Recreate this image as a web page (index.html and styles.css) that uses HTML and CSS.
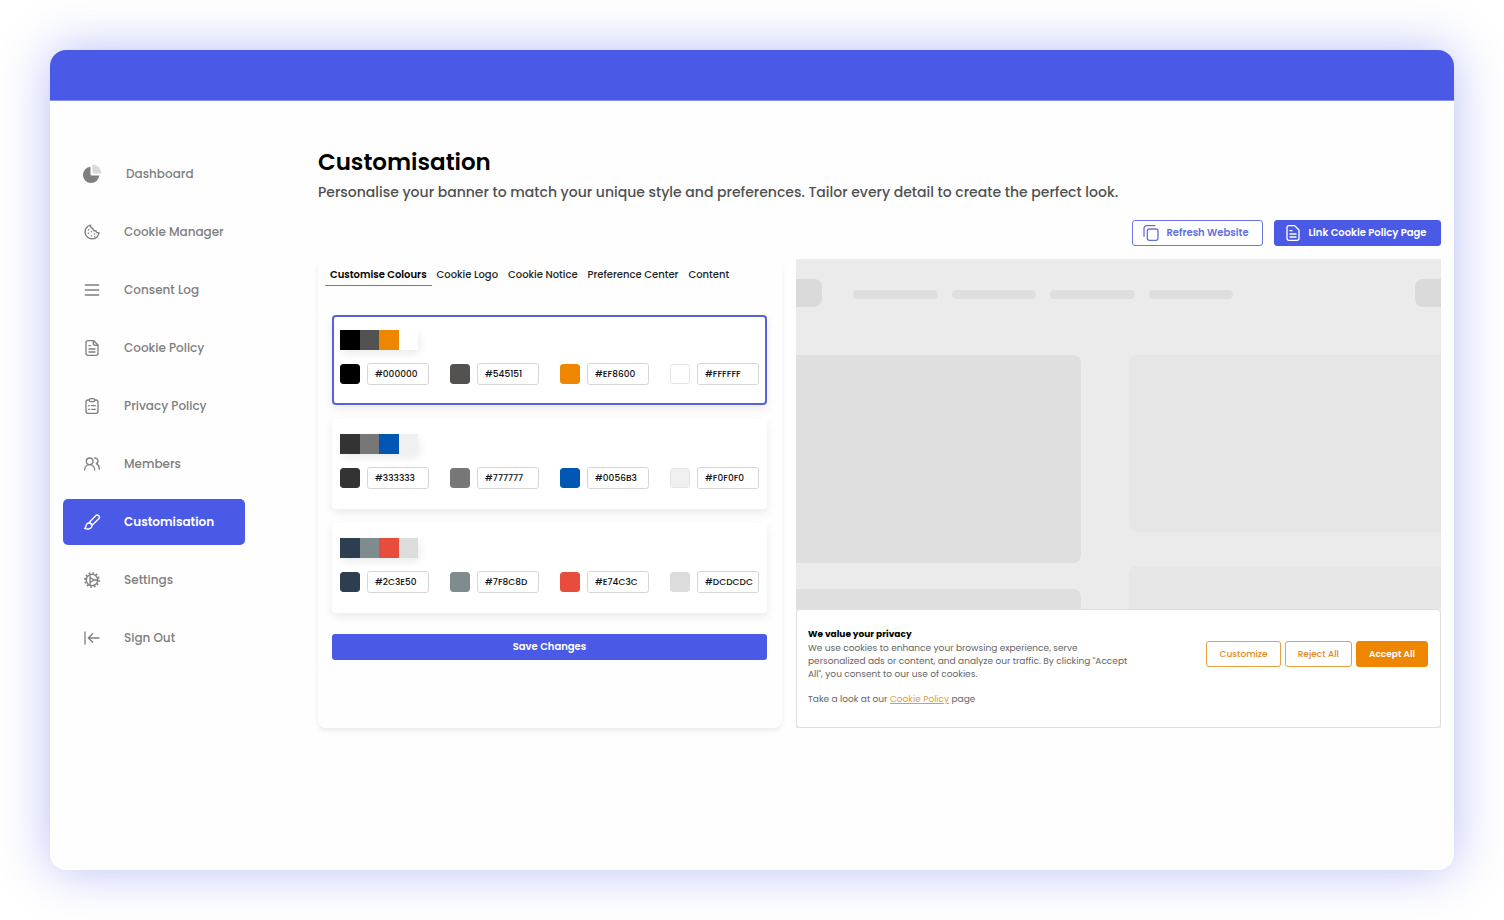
FILE: index.html
```html
<!DOCTYPE html>
<html lang="en">
<head>
<meta charset="utf-8">
<meta name="viewport" content="width=device-width, initial-scale=1">
<title>Customisation</title>
<link rel="stylesheet" href="styles.css">
</head>
<body>
<div class="window">
  <header class="topbar"></header>
  <div class="layout">
    <nav class="sidebar" aria-label="Main">
      <a class="nav-item nav-item-wide" href="#">
        <svg class="icon icon-pie" viewBox="0 0 20 20"><path d="M8.500 2.700a8.200 8.200 0 1 0 8.800 8.800H10a1.500 1.500 0 0 1-1.500-1.500z" fill="#7f7f7f"/><path d="M10.500.5a9 9 0 0 1 9 9h-7.500A1.500 1.500 0 0 1 10.500 8z" fill="#d8d8d8"/></svg>
        <span>Dashboard</span></a>
      <a class="nav-item" href="#">
        <svg class="icon" viewBox="0 0 24 24"><path d="M10 1.600A10.500 10.500 0 1 0 22.500 13c-2 1-4.500 0-4.500-3-3 1-5-1-4.500-3.500C10.500 6.500 9.300 4 10 1.600z"/><path d="M7 8.500v.1M11 11.500v.1M6.500 14v.1M11 17.500v.1M15.500 15v.1M16 19v.1" stroke-width="2.200"/></svg>
        <span>Cookie Manager</span></a>
      <a class="nav-item" href="#">
        <svg class="icon" viewBox="0 0 24 24"><path d="M2 4.500h20M2 12h20M2 19.500h20"/></svg>
        <span>Consent Log</span></a>
      <a class="nav-item" href="#">
        <svg class="icon" viewBox="0 0 24 24"><path d="M14.500 1H6a3 3 0 0 0-3 3v16a3 3 0 0 0 3 3h12a3 3 0 0 0 3-3V7.500zM14 1.500V5a3 3 0 0 0 3 3h3.500M7.500 8.500h2M7.500 13.500h9M7.500 18h9"/></svg>
        <span>Cookie Policy</span></a>
      <a class="nav-item" href="#">
        <svg class="icon" viewBox="0 0 24 24"><path d="M8 3H6a3 3 0 0 0-3 3v14a3 3 0 0 0 3 3h12a3 3 0 0 0 3-3V6a3 3 0 0 0-3-3h-2"/><rect x="8" y="1" width="8" height="4.500" rx="2"/><path d="M7 11.500h1.500M11.500 11.500H17M7 17h1.500M11.500 17H17"/></svg>
        <span>Privacy Policy</span></a>
      <a class="nav-item" href="#">
        <svg class="icon" viewBox="0 0 24 24"><circle cx="8.500" cy="8" r="5"/><path d="M1 21c0-4.500 3-8 7.500-8s7.500 3.500 7.500 8M16 3a4.500 4.500 0 0 1 2.500 8.500c2.500 1.200 4.500 4 4.500 8"/></svg>
        <span>Members</span></a>
      <a class="nav-item nav-item-active" href="#" aria-current="page">
        <svg class="icon" viewBox="0 0 24 24"><path d="M8.500 12 17.500 2.500a3.200 3.200 0 0 1 4.600 4.600L12.500 16.500M8.500 12l4 4.500"/><path d="M7.500 13.500a4.300 4.300 0 0 0-4.300 4.300c0 1.500-.7 2.700-2.200 3.700 4 1.800 10.800 1.300 10.800-3.700a4.300 4.300 0 0 0-4.300-4.300z"/></svg>
        <span>Customisation</span></a>
      <a class="nav-item" href="#">
        <svg class="icon" viewBox="0 0 24 24"><circle cx="12" cy="12" r="8.500"/><circle cx="12" cy="12" r="10.500" stroke-width="2.600" stroke-dasharray="2.700 2.798"/><path d="M9 5.500v13M9 8.500l6.500 3.500L9 15.500M15.500 12H20"/></svg>
        <span>Settings</span></a>
      <a class="nav-item" href="#">
        <svg class="icon" viewBox="0 0 24 24"><path d="M1.500 3v18M22.500 12H7M13 5.500 6.500 12l6.500 6.500"/></svg>
        <span>Sign Out</span></a>
    </nav>

    <main class="main">
      <h1 class="title">Customisation</h1>
      <p class="subtitle">Personalise your banner to match your unique style and preferences. Tailor every detail to create the perfect look.</p>
      <div class="actions">
        <button class="button button-outline" type="button">
          <svg class="icon" viewBox="0 0 24 24"><rect x="6.500" y="6" width="16" height="17" rx="3"/><path d="M1.500 17V5a4 4 0 0 1 4-4H18"/></svg>Refresh Website</button>
        <button class="button button-solid" type="button">
          <svg class="icon" viewBox="0 0 24 24"><path d="M14.500 1H6a3 3 0 0 0-3 3v16a3 3 0 0 0 3 3h12a3 3 0 0 0 3-3V7.500zM7.500 8.500h3M7.500 13.500h9M7.500 18h9"/></svg>Link Cookie Policy Page</button>
      </div>

      <div class="panels">
        <section class="editor">
          <div class="tabs" role="tablist">
            <button class="tab tab-active" type="button" role="tab" aria-selected="true">Customise Colours</button>
            <button class="tab" type="button" role="tab">Cookie Logo</button>
            <button class="tab" type="button" role="tab">Cookie Notice</button>
            <button class="tab" type="button" role="tab">Preference Center</button>
            <button class="tab" type="button" role="tab">Content</button>
          </div>
          <form class="palettes">
            <div class="palette palette-selected">
              <div class="strip"><i style="background:#000000"></i><i style="background:#545151"></i><i style="background:#ef8600"></i><i style="background:#ffffff"></i></div>
              <div class="fields">
                <div class="field"><input class="swatch" type="color" value="#000000" aria-label="Pick colour 1"><input class="hex" type="text" value="#000000" aria-label="Colour 1"></div>
                <div class="field"><input class="swatch" type="color" value="#545151" aria-label="Pick colour 2"><input class="hex" type="text" value="#545151" aria-label="Colour 2"></div>
                <div class="field"><input class="swatch" type="color" value="#ef8600" aria-label="Pick colour 3"><input class="hex" type="text" value="#EF8600" aria-label="Colour 3"></div>
                <div class="field"><input class="swatch swatch-light" type="color" value="#ffffff" aria-label="Pick colour 4"><input class="hex" type="text" value="#FFFFFF" aria-label="Colour 4"></div>
              </div>
            </div>
            <div class="palette">
              <div class="strip"><i style="background:#333333"></i><i style="background:#777777"></i><i style="background:#0056b3"></i><i style="background:#f0f0f0"></i></div>
              <div class="fields">
                <div class="field"><input class="swatch" type="color" value="#333333" aria-label="Pick colour 1"><input class="hex" type="text" value="#333333" aria-label="Colour 1"></div>
                <div class="field"><input class="swatch" type="color" value="#777777" aria-label="Pick colour 2"><input class="hex" type="text" value="#777777" aria-label="Colour 2"></div>
                <div class="field"><input class="swatch" type="color" value="#0056b3" aria-label="Pick colour 3"><input class="hex" type="text" value="#0056B3" aria-label="Colour 3"></div>
                <div class="field"><input class="swatch swatch-light" type="color" value="#f0f0f0" aria-label="Pick colour 4"><input class="hex" type="text" value="#F0F0F0" aria-label="Colour 4"></div>
              </div>
            </div>
            <div class="palette">
              <div class="strip"><i style="background:#2c3e50"></i><i style="background:#7f8c8d"></i><i style="background:#e74c3c"></i><i style="background:#dcdcdc"></i></div>
              <div class="fields">
                <div class="field"><input class="swatch" type="color" value="#2c3e50" aria-label="Pick colour 1"><input class="hex" type="text" value="#2C3E50" aria-label="Colour 1"></div>
                <div class="field"><input class="swatch" type="color" value="#7f8c8d" aria-label="Pick colour 2"><input class="hex" type="text" value="#7F8C8D" aria-label="Colour 2"></div>
                <div class="field"><input class="swatch" type="color" value="#e74c3c" aria-label="Pick colour 3"><input class="hex" type="text" value="#E74C3C" aria-label="Colour 3"></div>
                <div class="field"><input class="swatch" type="color" value="#dcdcdc" aria-label="Pick colour 4"><input class="hex" type="text" value="#DCDCDC" aria-label="Colour 4"></div>
              </div>
            </div>
            <button class="save" type="button">Save Changes</button>
          </form>
        </section>

        <section class="preview" aria-label="Banner preview">
          <div class="mock">
            <div class="mock-nav">
              <span class="mock-chip mock-chip-left"></span>
              <div class="mock-links"><span></span><span></span><span></span><span></span></div>
              <span class="mock-chip mock-chip-right"></span>
            </div>
            <div class="mock-content">
              <div class="mock-column mock-column-left"><span></span><span></span></div>
              <div class="mock-column mock-column-right"><span></span><span></span></div>
            </div>
          </div>
          <div class="banner">
            <div class="banner-text">
              <h2>We value your privacy</h2>
              <p>We use cookies to enhance your browsing experience, serve personalized ads or content, and analyze our traffic. By clicking "Accept All", you consent to our use of cookies.</p>
              <p>Take a look at our <a href="#">Cookie Policy</a> page</p>
            </div>
            <div class="banner-actions">
              <button class="choice" type="button">Customize</button>
              <button class="choice" type="button">Reject All</button>
              <button class="choice choice-accept" type="button">Accept All</button>
            </div>
          </div>
        </section>
      </div>
    </main>
  </div>
</div>
</body>
</html>
```

FILE: styles.css
```css
* { box-sizing: border-box; }

body {
  margin: 0;
  padding: 50px;
  min-height: 100vh;
  display: flex;
  background: #fff;
  color: #000;
  font-family: Poppins, Inter, sans-serif;
  font-size: 12px;
}

button, input { font: inherit; margin: 0; }
button { cursor: pointer; white-space: nowrap; }

.window {
  flex: 1;
  min-width: 0;
  background: #fefefe;
  border-radius: 16px;
  overflow: hidden;
  box-shadow: 0 0 50px rgba(75, 91, 231, 0.4);
}

.topbar {
  height: 51px;
  background: #4b5ae6;
  border-bottom: 1px solid #8490ee;
}

.layout {
  display: grid;
  grid-template-columns: 255px minmax(0, 1fr);
  padding: 46px 13px;
}

/* Sidebar */
.sidebar {
  display: flex;
  flex-direction: column;
  gap: 12px;
  padding: 4px 73px 0 0;
}

.nav-item {
  display: flex;
  align-items: center;
  gap: 24px;
  height: 46px;
  padding: 0 21px;
  border-radius: 5px;
  color: #7f7f7f;
  font-weight: 500;
  text-decoration: none;
  white-space: nowrap;
}

.nav-item-wide { padding-left: 19px; }

.nav-item-active {
  background: #4b5ae6;
  color: #fff;
  font-weight: 600;
}

.icon {
  width: 16px;
  height: 16px;
  flex: none;
  overflow: visible;
  fill: none;
  stroke: currentColor;
  stroke-width: 2;
  stroke-linecap: round;
  stroke-linejoin: round;
}

.icon circle[stroke-dasharray] { stroke-linecap: butt; }

.icon-pie { width: 20px; height: 20px; stroke: none; }

/* Heading */
.title {
  margin: 0;
  font-size: 23px;
  line-height: 30px;
  font-weight: 600;
}

.subtitle {
  margin: 3px 0 0;
  font-size: 14px;
  line-height: 24px;
  font-weight: 500;
  color: #505050;
}

.actions {
  display: flex;
  justify-content: flex-end;
  gap: 11px;
  margin: 16px 0 13px;
}

.button {
  display: flex;
  align-items: center;
  justify-content: center;
  gap: 7px;
  height: 26px;
  padding: 0 13px 0 10px;
  border: 1px solid #4b5ae6;
  border-radius: 3px;
  font-size: 10px;
  font-weight: 600;
}

.button-outline { min-width: 131px; background: #fff; border-color: #6b77e0; color: #6470dc; }
.button-solid { min-width: 167px; background: #4b5ae6; color: #fff; }

.panels {
  display: grid;
  grid-template-columns: minmax(464px, 464fr) minmax(0, 645fr);
  gap: 14px;
}

/* Colour editor */
.editor {
  padding-bottom: 68px;
  border-radius: 8px;
  box-shadow: 0 3px 5px rgba(0, 0, 0, 0.07);
}

.tabs {
  display: flex;
  padding: 5px 7px 0;
}

.tab {
  height: 22px;
  padding: 0 5px;
  border: 0;
  border-bottom: 1px solid transparent;
  background: none;
  color: #222;
  font-size: 10px;
  font-weight: 500;
}

.tab-active {
  color: #000;
  font-weight: 600;
  border-radius: 0;
  border-color: #6d73cf;
}

.palettes {
  display: flex;
  flex-direction: column;
  gap: 14px;
  padding: 29px 15px 0 14px;
}

.palette {
  height: 90px;
  padding: 13px 6px 0;
  border: 2px solid transparent;
  border-radius: 4px;
  background: #fff;
  box-shadow: 0 4px 10px rgba(0, 0, 0, 0.08);
}

.palette-selected { border-color: #5661dc; }

.strip {
  display: flex;
  width: 78px;
  height: 20px;
  margin-bottom: 13px;
  box-shadow: 2px 4px 8px rgba(0, 0, 0, 0.08);
}

.strip i { flex: 1; }

.fields { display: flex; justify-content: space-between; }

.field { display: flex; align-items: center; gap: 7px; }

.swatch {
  appearance: none;
  width: 20px;
  height: 20px;
  padding: 0;
  border: 0;
  border-radius: 3px;
  background: none;
  overflow: hidden;
}

.swatch::-webkit-color-swatch-wrapper { padding: 0; }
.swatch::-webkit-color-swatch { border: 0; border-radius: 3px; }
.swatch-light { border: 1px solid #e4e4e4; }

.hex {
  width: 62px;
  height: 22px;
  padding: 0 0 0 7px;
  border: 1px solid #d6d6d6;
  border-radius: 3px;
  background: #fff;
  color: #111;
  font-size: 9px;
  font-weight: 500;
}

.save {
  height: 26px;
  margin-top: 7px;
  border: 0;
  border-radius: 3px;
  background: #4b5ae6;
  color: #fff;
  font-size: 10px;
  font-weight: 600;
}

/* Website preview */
.preview {
  display: flex;
  flex-direction: column;
  background: #ebebeb;
}

.mock {
  flex: 1 1 350px;
  overflow: hidden;
  padding-top: 20px;
}

.mock-nav {
  display: flex;
  align-items: center;
  justify-content: space-between;
  margin-bottom: 48px;
}

.mock-chip { width: 26px; height: 28px; background: #dadada; }
.mock-chip-left { border-radius: 0 8px 8px 0; }
.mock-chip-right { border-radius: 8px 0 0 8px; }

.mock-links {
  flex: 1;
  display: flex;
  gap: 14px;
  padding: 2px 182px 0 31px;
}

.mock-links span {
  flex: 1;
  height: 9px;
  border-radius: 5px;
  background: #dedede;
}

.mock-content {
  display: grid;
  grid-template-columns: 285fr 312fr;
  gap: 48px;
}

.mock-column { display: flex; flex-direction: column; }
.mock-column-left { gap: 26px; }
.mock-column-left span { height: 208px; border-radius: 0 8px 8px 0; background: #dfdfdf; }
.mock-column-right { gap: 34px; }
.mock-column-right span { height: 177px; border-radius: 8px 0 0 8px; background: #e6e6e6; }

.banner {
  display: flex;
  justify-content: space-between;
  align-items: flex-start;
  gap: 20px;
  min-height: 119px;
  padding: 18px 12px 4px 11px;
  border: 1px solid #dfdfdf;
  border-radius: 4px;
  background: #fff;
  font-size: 9px;
  line-height: 13px;
  color: #666;
}

.banner-text { max-width: 320px; }
.banner-text h2 { margin: 0 0 1px; font-size: 9px; font-weight: 700; line-height: 13px; color: #000; }
.banner-text p { margin: 0 0 12px; }
.banner-text a { color: #e79a3a; }

.banner-actions { display: flex; gap: 4px; padding-top: 13px; }

.choice {
  height: 26px;
  padding: 0 12px;
  border: 1px solid #e9a23f;
  border-radius: 3px;
  background: #fff;
  color: #e28a1c;
  font-size: 9px;
  font-weight: 500;
}

.choice-accept { background: #ef8600; border-color: #ef8600; color: #fff; font-weight: 600; }
```
